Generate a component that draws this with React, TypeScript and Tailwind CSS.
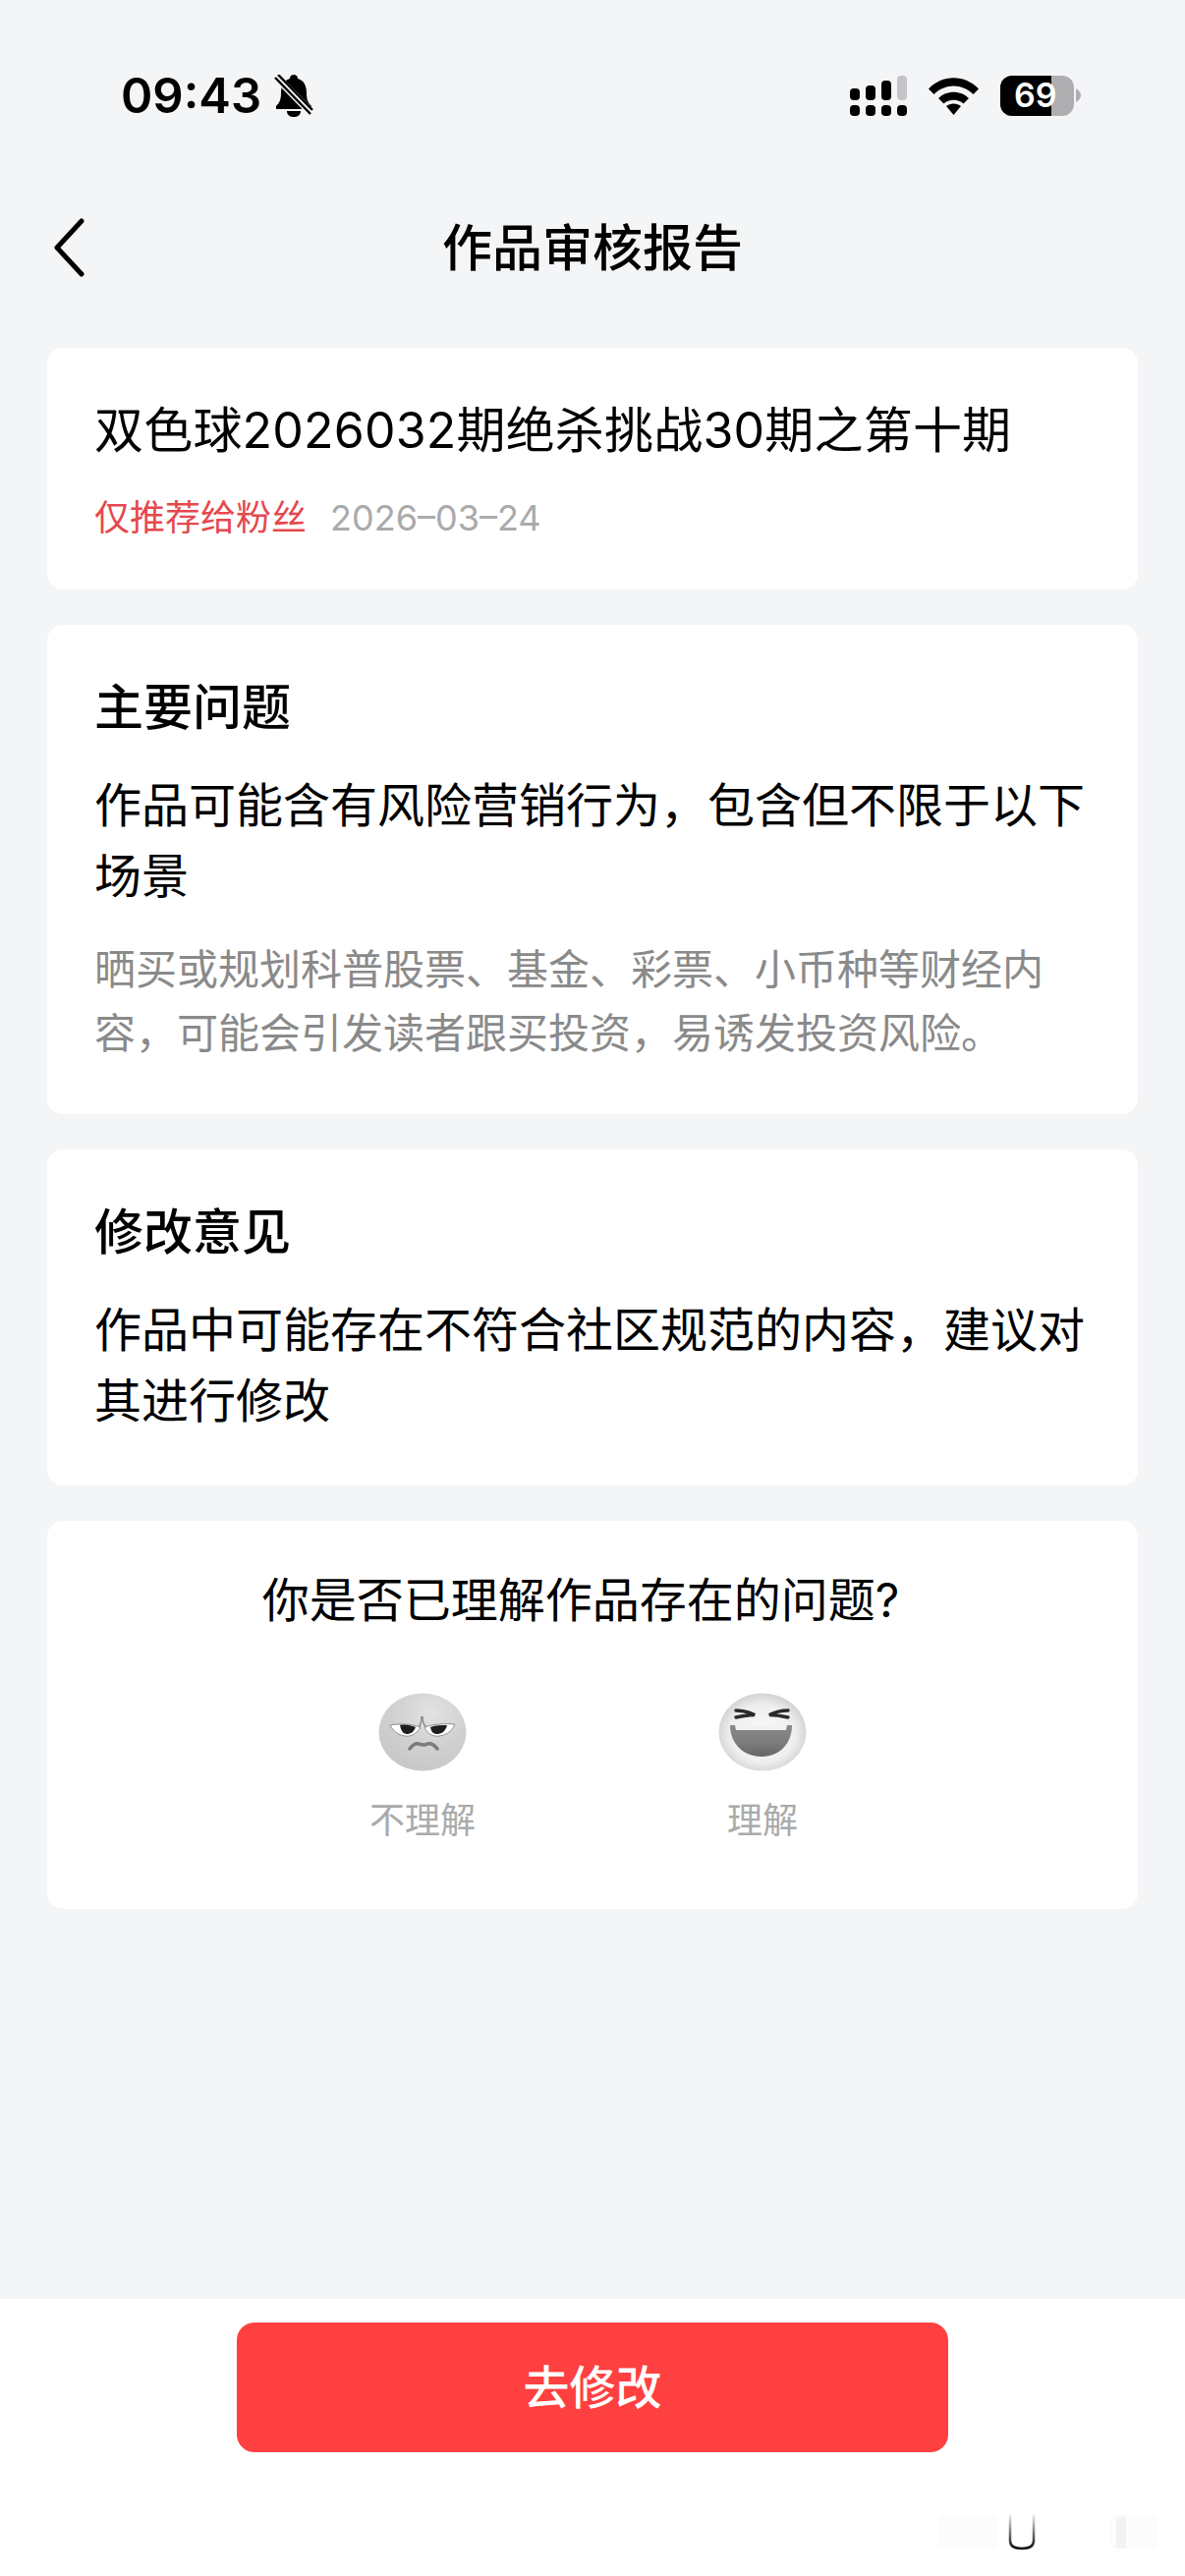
const font = { fontFamily: '"Inter", "Noto Sans CJK SC", sans-serif' };

function Signal() {
  return (
    <svg width="58" height="41" viewBox="0 0 58 41">
      <rect x="0" y="13" width="10" height="12" rx="4" fill="#000" />
      <rect x="16" y="10" width="10" height="15" rx="4" fill="#000" />
      <rect x="32" y="5" width="10" height="20" rx="4" fill="#000" />
      <rect x="48" y="0" width="10" height="25" rx="4" fill="#c4c4c6" />
      <rect x="0" y="30" width="10" height="11" rx="4" fill="#000" />
      <rect x="16" y="30" width="10" height="11" rx="4" fill="#000" />
      <rect x="32" y="30" width="10" height="11" rx="4" fill="#000" />
      <rect x="48" y="30" width="10" height="11" rx="4" fill="#000" />
    </svg>
  );
}

function Wifi() {
  return (
    <svg width="51" height="39" viewBox="0 0 51 39">
      <path d="M0 12.5 C14 -2.5 37 -2.5 51 12.5 L45.5 18 C34 6.5 17 6.5 5.500 18 Z" fill="#000" />
      <path d="M10 22 C18 13.500 33 13.500 41 22 L35.500 27.500 C30 22.500 21 22.500 15.500 27.500 Z" fill="#000" />
      <path d="M18 30 C22 26.500 29 26.500 33 30 L25.500 39 Z" fill="#000" />
    </svg>
  );
}

function Battery() {
  return (
    <div className="flex items-center">
      <div className="relative flex h-[41px] w-[75px] overflow-hidden rounded-[12px] bg-[#afafb1]">
        <div className="h-full w-[52px] bg-black" />
        <span className="absolute inset-y-0 left-[14px] flex items-center text-[34px] font-semibold leading-none text-white">69</span>
      </div>
      <svg className="ml-[2px]" width="5" height="14" viewBox="0 0 5 14">
        <path d="M0 0 C3 2 5 4 5 7 C5 10 3 12 0 14 Z" fill="#afafb1" />
      </svg>
    </div>
  );
}

function MutedBell() {
  return (
    <svg width="40" height="43" viewBox="0 0 40 43">
      <path d="M20 0 C22 0 24 1 24 4 C31 6 33 12 33 19 C33 26 35 29 38 32 L38 35 L2 35 L2 32 C5 29 7 26 7 19 C7 12 9 6 16 4 C16 1 18 0 20 0 Z" fill="#000" />
      <path d="M13 37 L27 37 C27 41 24 43 20 43 C16 43 13 41 13 37 Z" fill="#000" />
      <path d="M1 1 L39 40" stroke="#f4f5f7" strokeWidth="8" />
      <path d="M1 3 L37 40" stroke="#000" strokeWidth="2.500" />
      <path d="M4 0 L39 36" stroke="#000" strokeWidth="2.500" />
    </svg>
  );
}

function ConfusedFace() {
  return (
    <svg width="90" height="80" viewBox="0 0 90 80">
      <defs>
        <radialGradient id="faceA" cx="60%" cy="25%" r="75%">
          <stop offset="0%" stopColor="#e2e2e2" />
          <stop offset="60%" stopColor="#d0d0d0" />
          <stop offset="100%" stopColor="#c8c8c8" />
        </radialGradient>
      </defs>
      <ellipse cx="45" cy="40" rx="44.500" ry="39.500" fill="url(#faceA)" />
      <path d="M12 33 C22 31 34 32 43 35 C39 42 33 45 27 44 C20 43 15 39 12 33 Z" fill="#fff" stroke="#8c8c8c" strokeWidth="1" />
      <path d="M78 32 C68 31 56 32 47 35 C50 42 56 45 62 44 C70 43 75 39 78 32 Z" fill="#fff" stroke="#8c8c8c" strokeWidth="1" />
      <path d="M22 33 C27 32 33 33 38 35 C36 40 33 42 29 42 C25 42 23 38 22 33 Z" fill="#1e1e1e" />
      <path d="M53 35 C58 33 64 33 70 33 C69 38 65 42 60 42 C56 42 54 40 53 35 Z" fill="#1e1e1e" />
      <path d="M44 24 C44 30 43 33 41 35 M45 24 C45 30 46 33 49 35" stroke="#8c8c8c" strokeWidth="1.500" fill="none" />
      <path d="M32 57 C35 53 38 51 41 52 C44 53 47 54 50 52 C54 51 57 53 60 57" stroke="#7c7c7c" strokeWidth="3.500" fill="none" strokeLinecap="round" />
    </svg>
  );
}

function LaughFace() {
  return (
    <svg width="90" height="80" viewBox="0 0 90 80">
      <defs>
        <radialGradient id="faceB" cx="50%" cy="52%" r="52%">
          <stop offset="0%" stopColor="#fafafa" />
          <stop offset="72%" stopColor="#eeeeee" />
          <stop offset="100%" stopColor="#d2d2d2" />
        </radialGradient>
        <linearGradient id="mouthB" x1="0" y1="0" x2="0" y2="1">
          <stop offset="0%" stopColor="#8a8a8a" />
          <stop offset="55%" stopColor="#7c7c7c" />
          <stop offset="100%" stopColor="#666666" />
        </linearGradient>
      </defs>
      <ellipse cx="45" cy="40" rx="44.500" ry="39.500" fill="url(#faceB)" />
      <path d="M12 33 L75 33 C75 52 62 65 44 65 C26 65 12 52 12 33 Z" fill="url(#mouthB)" />
      <path d="M17 33 L70 33 L69 38 L18 38 Z" fill="#f2f2f2" />
      <path d="M18 18 C25 18 32 20 37 22.500 C31 22.500 25 23.500 18 25" stroke="#2a2a2a" strokeWidth="3.500" fill="none" strokeLinecap="round" />
      <path d="M71 18 C64 18 57 20 52 22.500 C58 22.500 64 23.500 71 25" stroke="#2a2a2a" strokeWidth="3.500" fill="none" strokeLinecap="round" />
    </svg>
  );
}

export default function App() {
  return (
    <div className="flex h-[2622px] w-[1206px] flex-col overflow-hidden bg-[#f4f5f7] text-black" style={font}>
      <div className="flex h-[194px] items-center justify-between pl-[123px] pr-[106px]">
        <div className="flex items-center gap-[13px]">
          <span className="text-[49px] font-semibold leading-none">09:43</span>
          <MutedBell />
        </div>
        <div className="flex items-center gap-[22px]">
          <Signal />
          <Wifi />
          <Battery />
        </div>
      </div>

      <div className="grid h-[116px] grid-cols-3 items-center pl-[54px] pr-[54px]">
        <svg width="32" height="60" viewBox="0 0 32 60" fill="none">
          <path d="M29 3 L4 30 L29 57" stroke="#000" strokeWidth="5" strokeLinecap="round" strokeLinejoin="round" />
        </svg>
        <div className="whitespace-nowrap text-center text-[51px] font-medium leading-none">作品审核报告</div>
      </div>

      <div className="flex flex-col gap-[36px] px-[48px] pt-[44px]">
        <div className="rounded-[16px] bg-white px-[48px] pb-[48px] pt-[48px]">
          <div className="whitespace-nowrap text-[50px] leading-[72px] tracking-[0.2px]">双色球2026032期绝杀挑战30期之第十期</div>
          <div className="mt-[28px] flex items-center gap-[24px] text-[36px] leading-[50px]">
            <span className="text-[#e5484d]">仅推荐给粉丝</span>
            <span className="text-[#aaaaaa]">2026–03–24</span>
          </div>
        </div>

        <div className="rounded-[16px] bg-white px-[48px] pb-[50px] pt-[48px]">
          <div className="text-[50px] font-medium leading-[72px]">主要问题</div>
          <div className="mt-[28px] text-[48px] leading-[72px]">作品可能含有风险营销行为，包含但不限于以下场景</div>
          <div className="mt-[26px] text-[42px] leading-[65px] text-[#8a8a8a]">晒买或规划科普股票、基金、彩票、小币种等财经内容，可能会引发读者跟买投资，易诱发投资风险。</div>
        </div>

        <div className="rounded-[16px] bg-white px-[48px] pb-[50px] pt-[48px]">
          <div className="text-[50px] font-medium leading-[72px]">修改意见</div>
          <div className="mt-[28px] text-[48px] leading-[72px]">作品中可能存在不符合社区规范的内容，建议对其进行修改</div>
        </div>

        <div className="rounded-[16px] bg-white pb-[65px] pt-[45px]">
          <div className="pr-[24px] text-center text-[48px] leading-[72px]">你是否已理解作品存在的问题?</div>
          <div className="mt-[58px] flex justify-center gap-[146px]">
            <div className="flex w-[200px] flex-col items-center">
              <ConfusedFace />
              <div className="mt-[25px] text-[36px] leading-[50px] text-[#aaaaaa]">不理解</div>
            </div>
            <div className="flex w-[200px] flex-col items-center">
              <LaughFace />
              <div className="mt-[25px] text-[36px] leading-[50px] text-[#aaaaaa]">理解</div>
            </div>
          </div>
        </div>
      </div>

      <div className="relative mt-auto h-[282px] bg-white pt-[24px]">
        <button type="button" className="mx-auto block h-[132px] w-[724px] rounded-[18px] bg-[#ff4040] text-[47px] font-medium text-white">
          去修改
        </button>
        {/* faint watermark left over in the corner */}
        <svg className="absolute left-[950px] top-[218px]" width="240" height="40" viewBox="0 0 240 40" fill="none">
          <defs>
            <linearGradient id="markFade" x1="0" y1="0" x2="0" y2="1">
              <stop offset="0%" stopColor="#000" stopOpacity="0.05" />
              <stop offset="100%" stopColor="#000" stopOpacity="0.95" />
            </linearGradient>
          </defs>
          <rect x="5" y="2" width="60" height="34" fill="#000" fillOpacity="0.012" />
          <rect x="180" y="2" width="48" height="34" fill="#000" fillOpacity="0.012" />
          <rect x="186" y="4" width="10" height="32" fill="#000" fillOpacity="0.04" />
          <path d="M78 1 L78 28 C78 33 82 36 90 36 C98 36 102 33 102 28 L102 1" stroke="url(#markFade)" strokeWidth="2.500" />
        </svg>
      </div>
    </div>
  );
}
